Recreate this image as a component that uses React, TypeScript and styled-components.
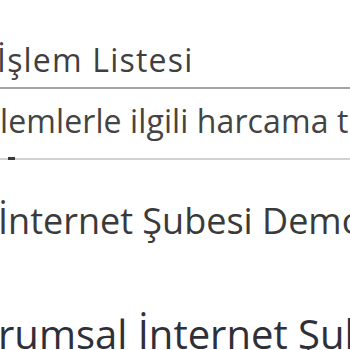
import React from 'react';
import styled, { createGlobalStyle } from 'styled-components';

const GlobalStyle = createGlobalStyle`
    html, body {
        margin: 0;
        padding: 0;
        background: #ffffff;
        overflow: hidden;
    }
    body {
        font-family: "Open Sans", "Noto Sans", "DejaVu Sans", sans-serif;
        color: #3d3d3d;
    }
`;

const Page = styled.div`
    width: 350px;
    height: 350px;
    overflow: hidden;
    white-space: nowrap;
`;

const Heading = styled.h2`
    margin: 40px 0 0 -3px;
    padding-bottom: 7px;
    font-size: 32px;
    line-height: 40px;
    font-weight: 400;
    letter-spacing: 1.2px;
    color: #3f3f3f;
    border-bottom: 2px solid #a4a4a4;
`;

const Description = styled.p`
    position: relative;
    margin: 12px 0 0 0;
    padding-bottom: 17px;
    font-size: 32px;
    line-height: 40px;
    letter-spacing: 0.1px;
    color: #444444;
    border-bottom: 2px solid #d2d2d2;
`;

const Marker = styled.span`
    position: absolute;
    left: 8px;
    bottom: -2px;
    width: 7px;
    height: 3px;
    background: #3a3a3a;
`;

const SubTitle = styled.div`
    margin: 37px 0 0 -2px;
    font-size: 36px;
    line-height: 48px;
    color: #3a3a3a;
`;

const BigTitle = styled.div`
    margin: 62px 0 0 -2px;
    font-size: 40px;
    line-height: 54px;
    color: #2f2f3a;
`;

export default function App() {
    return (
        <Page>
            <GlobalStyle />
            <Heading>İşlem Listesi</Heading>
            <Description>
                lemlerle ilgili harcama tutarları
                <Marker />
            </Description>
            <SubTitle>İnternet Şubesi Demo</SubTitle>
            <BigTitle>rumsal İnternet Şubesi</BigTitle>
        </Page>
    );
}
